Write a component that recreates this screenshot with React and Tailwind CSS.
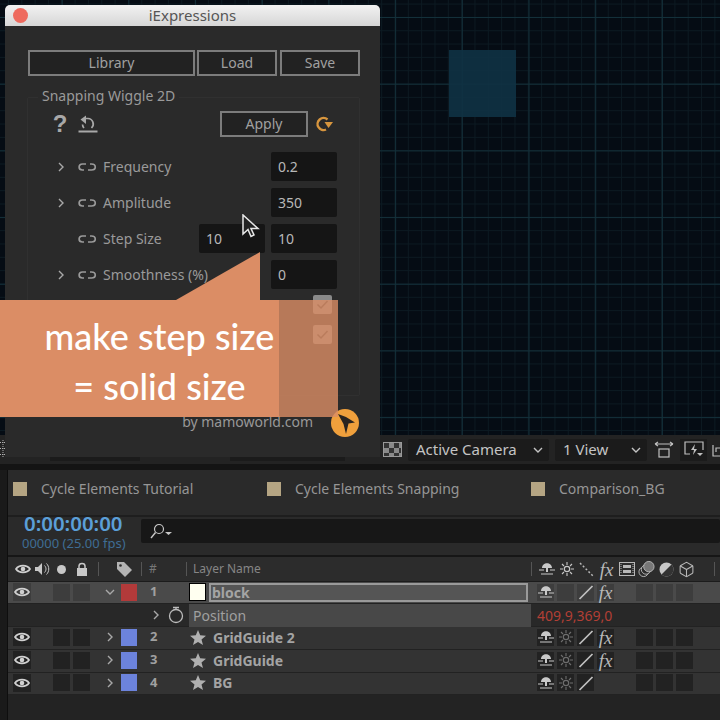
import React from "react";
import { Box } from "lucide-react";

const sans = "font-['Noto_Sans',sans-serif]";

const Eye = () => (
  <svg width="16" height="12" viewBox="0 0 16 12" className="text-[#d0d0d0]">
    <path d="M1 6C4 1.500 12 1.500 15 6C12 10.500 4 10.500 1 6Z" fill="none" stroke="currentColor" strokeWidth="1.800" />
    <circle cx="8" cy="6" r="2.300" fill="currentColor" />
  </svg>
);
const Chevron = ({ down }) => (
  <svg width="10" height="12" viewBox="0 0 10 12" className="text-[#a8a8a8]">
    <path d={down ? "M1 4L5 8L9 4" : "M3 2L7 6L3 10"} fill="none" stroke="currentColor" strokeWidth="1.400" />
  </svg>
);
const Link = () => (
  <svg width="22" height="10" viewBox="0 0 22 10" className="text-[#9a9a9a]">
    <path d="M9 2H5.500C1 2 1 8 5.500 8H7M13 2H14.500C19.500 2 19.500 8 14.500 8H11" fill="none" stroke="currentColor" strokeWidth="1.700" />
  </svg>
);
const Shy = () => (
  <svg width="16" height="14" viewBox="0 0 16 14" className="text-[#c8c8c8]">
    <path d="M3 6C3 -0.500 13 -0.500 13 6H9V10H7V6Z" fill="currentColor" />
    <path d="M0 8H5M11 8H16M2 12H14" stroke="currentColor" strokeWidth="1.200" />
  </svg>
);
const Sun = ({ dim }) => (
  <svg width="14" height="14" viewBox="0 0 14 14" className={dim ? "text-[#6e6e6e]" : "text-[#c8c8c8]"}>
    <circle cx="7" cy="7" r="2.700" fill="none" stroke="currentColor" strokeWidth="1.200" />
    <path d="M7 0V3M7 11V14M0 7H3M11 7H14M2 2L4 4M10 10L12 12M12 2L10 4M4 10L2 12" stroke="currentColor" strokeWidth="1.100" />
  </svg>
);
const Slash = () => (
  <svg width="16" height="16" viewBox="0 0 16 16" className="text-[#c0c0c0]">
    <path d="M1.500 15L14.500 2" stroke="currentColor" strokeWidth="1.700" />
  </svg>
);
const Fx = () => <span className="font-['Liberation_Serif',serif] italic text-[19px] leading-none text-[#b8b8b8]">fx</span>;
const Star = () => (
  <svg width="16" height="15" viewBox="0 0 16 15" className="text-[#b0b0b0]">
    <path d="M8 0L10.200 5.200L16 5.700L11.500 9.400L13 15L8 12L3 15L4.500 9.400L0 5.700L5.800 5.200Z" fill="currentColor" />
  </svg>
);

const SwitchCell = ({ bg, children }) => (
  <div className={`w-[17px] h-[17px] flex items-center justify-center ${bg}`}>{children}</div>
);

const Layer = ({ n, name, color, cellBg, rowBg, h, star, open, fx = true, sunDim = true }) => (
  <div className={`flex items-center w-full ${h} ${rowBg} border-b border-[#222222] ${star ? "pb-[2px]" : "pb-[1px]"}`}>
    <div className={`ml-[5px] w-[18px] h-[18px] flex items-center justify-center ${cellBg}`}><Eye /></div>
    <div className={`ml-[22px] w-[17px] h-[17px] ${cellBg}`} />
    <div className={`ml-[3px] w-[17px] h-[17px] ${cellBg}`} />
    <div className="ml-[14px] w-[12px] flex justify-center"><Chevron down={open} /></div>
    <div className={`ml-[5px] w-[16px] h-[17px] ${color}`} />
    <div className={`ml-[13px] w-[10px] text-[13px] font-bold text-[#a0a0a0] ${sans}`}>{n}</div>
    <div className="ml-[29px] w-[17px] flex justify-center">
      {star ? <Star /> : <div className="w-[18px] h-[18px] bg-[#fffff0] border border-black" />}
    </div>
    {star ? (
      <div className={`ml-[7px] w-[318px] text-[14px] font-bold text-[#a4a4a4] ${sans}`}>{name}</div>
    ) : (
      <div className={`ml-[3px] w-[319px] h-[19px] mr-[3px] border-2 border-[#9a9a9a] bg-[#555555] pl-[1px] flex items-center text-[14px] font-bold text-[#a4a4a4] ${sans}`}>{name}</div>
    )}
    <div className="ml-[6px] flex gap-[3px] items-center">
      <SwitchCell bg={cellBg}><Shy /></SwitchCell>
      <SwitchCell bg={cellBg}>{sunDim ? <Sun dim /> : null}</SwitchCell>
      <SwitchCell bg={cellBg}><Slash /></SwitchCell>
      {fx ? <SwitchCell bg={cellBg}><Fx /></SwitchCell> : <div className="w-[17px]" />}
      <div className="w-[16px]" />
      <div className={`w-[17px] h-[17px] ${cellBg}`} />
      <div className={`w-[17px] h-[17px] ${cellBg}`} />
      <div className={`w-[17px] h-[17px] ${cellBg}`} />
    </div>
  </div>
);

const Btn = ({ w, h = "h-[26px]", children }) => (
  <div className={`${w} ${h} border-2 border-[#7c7c7c] bg-[#222222] pb-[2px] flex items-center justify-center text-[14px] text-[#a0a0a0]`}>{children}</div>
);
const Field = ({ children }) => (
  <div className="w-[66px] h-[29px] rounded-[2px] bg-[#151515] pl-[7px] flex items-center text-[14px] text-[#b8b8b8]">{children}</div>
);
const Param = ({ label, chevron = true, second, value }) => (
  <div className="flex items-center h-[29px] mb-[7px]">
    <div className="w-[20px] ml-[23px] flex justify-center">{chevron && <Chevron />}</div>
    <div className="ml-[6px]"><Link /></div>
    <div className="ml-[4px] w-[96px] text-[14px] text-[#9a9a9a] whitespace-nowrap">{label}</div>
    <div className="w-[65px]">{second && <Field>{second}</Field>}</div>
    <div className="ml-[7px]"><Field>{value}</Field></div>
  </div>
);
const Check = () => (
  <div className="w-[19px] h-[19px] rounded-[2px] bg-[#8a8a8a] flex items-center justify-center">
    <svg width="13" height="11" viewBox="0 0 13 11" className="text-[#3a3a3a]"><path d="M1.500 5.500L5 9L11.500 2" fill="none" stroke="currentColor" strokeWidth="1.500" /></svg>
  </div>
);
const Swatch = () => <div className="w-[14px] h-[14px] bg-[#b5a583]" />;

export default function App() {
  return (
    <div className={`relative w-[720px] h-[720px] overflow-hidden bg-[#232323] flex flex-col ${sans}`}>
      {/* viewer */}
      <div className="h-[435px] bg-[#050c14] flex-none relative bg-[linear-gradient(#13303a_1px,transparent_1px),linear-gradient(90deg,#13303a_1px,transparent_1px),linear-gradient(#0c1a22_1px,transparent_1px),linear-gradient(90deg,#0c1a22_1px,transparent_1px)] bg-[size:66.700px_66.700px,66.700px_66.700px,13.340px_13.340px,13.340px_13.340px] bg-[position:61.700px_17px,61.700px_17px,8px_3.600px,8px_3.600px]">
        <div className="absolute left-[449px] top-[50px] w-[67px] h-[67px] bg-[#0f3244] opacity-90" />
      </div>

      {/* viewer toolbar */}
      <div className="h-[29px] flex-none bg-[#232323] flex items-center">
        <div className="ml-[50px] w-[90px] h-[22px] bg-[#1b1b1b]" />
        <div className="ml-[90px] w-[115px] h-[22px] bg-[#1b1b1b]" />
        <div className="ml-[38px] w-[19px] h-[15px] bg-[repeating-conic-gradient(#8a8a8a_0_25%,#333333_0_50%)] bg-[size:10px_10px] border border-[#999999]" />
        <div className="ml-[6px] w-[141px] h-[22px] rounded-[2px] bg-[#1b1b1b] flex items-center justify-between pl-[8px] pr-[5px] text-[15px] text-[#c4c4c4]">
          Active Camera
          <svg width="12" height="12" viewBox="0 0 12 12" className="text-[#c4c4c4]"><path d="M2 4L6 8L10 4" fill="none" stroke="currentColor" strokeWidth="1.400" /></svg>
        </div>
        <div className="ml-[6px] w-[92px] h-[22px] rounded-[2px] bg-[#1b1b1b] flex items-center justify-between pl-[8px] pr-[5px] text-[15px] text-[#c4c4c4]">
          1 View
          <svg width="12" height="12" viewBox="0 0 12 12" className="text-[#c4c4c4]"><path d="M2 4L6 8L10 4" fill="none" stroke="currentColor" strokeWidth="1.400" /></svg>
        </div>
        <svg width="22" height="18" viewBox="0 0 22 18" className="ml-[6px] text-[#c0c0c0]">
          <path d="M2 3H20M2 3L5 1M2 3L5 5M20 3L17 1M20 3L17 5" fill="none" stroke="currentColor" strokeWidth="1.200" />
          <rect x="6" y="8" width="10" height="8" fill="none" stroke="currentColor" strokeWidth="1.200" />
        </svg>
        <div className="ml-[5px] w-[27px] h-[22px] bg-[#1b1b1b] flex items-center justify-center">
          <svg width="20" height="17" viewBox="0 0 20 17" className="text-[#c0c0c0]">
            <path d="M6 13H1V1H19V9" fill="none" stroke="currentColor" strokeWidth="1.200" />
            <path d="M11 3L7 9H10L9 14L13 8H10Z" fill="currentColor" />
            <path d="M13 12H19L16 15Z" fill="currentColor" />
          </svg>
        </div>
        <svg width="8" height="14" viewBox="0 0 8 14" className="ml-[5px] text-[#c0c0c0]"><path d="M1 2V13H8M4 9V5H8" fill="none" stroke="currentColor" strokeWidth="1.200" /></svg>
      </div>

      <div className="h-[6px] flex-none bg-[#141414]" />

      {/* timeline */}
      <div className="flex-1 flex">
        <div className="w-[8px] bg-[#1a1a1a] border-r border-[#0e0e0e]" />
        <div className="flex-1 flex flex-col bg-[#232323] min-w-0">
          <div className="h-[47px] bg-[#2a2a2a] border-b-2 border-[#1e1e1e] flex items-center pb-[8px] text-[14px] text-[#969696] whitespace-nowrap">
            <div className="ml-[5px]"><Swatch /></div>
            <div className="ml-[14px] w-[226px]">Cycle Elements Tutorial</div>
            <Swatch />
            <div className="ml-[14px] w-[236px]">Cycle Elements Snapping</div>
            <Swatch />
            <div className="ml-[14px]">Comparison_BG</div>
          </div>
          <div className="h-[38px] bg-[#2a2a2a] flex">
            <div className="w-[133px] pl-[14px] flex flex-col items-start -mt-[4px] whitespace-nowrap">
              <div className="text-[20.400px] leading-[20px] font-semibold text-[#5b9fd8] pl-[2px]">0:00:00:00</div>
              <div className="mt-[2px] text-[13px] leading-[17px] text-[#3f6d94]">00000 (25.00 fps)</div>
            </div>
            <div className="flex-1 h-[24px] mt-[2px] rounded-[2px] bg-[#171717] flex items-center pl-[9px]">
              <svg width="22" height="16" viewBox="0 0 22 16" className="text-[#c8c8c8]">
                <circle cx="9" cy="6" r="4.500" fill="none" stroke="currentColor" strokeWidth="1.200" />
                <path d="M5.500 9.500L1 15" stroke="currentColor" strokeWidth="1.400" />
                <path d="M15 9H22L18.500 12Z" fill="currentColor" />
              </svg>
            </div>
          </div>
          <div className="h-[27px] bg-[#2c2c2c] border-t-2 border-[#161616] border-b border-b-[#1c1c1c] flex items-center text-[12px] text-[#868686] whitespace-nowrap">
            <div className="ml-[7px]"><Eye /></div>
            <svg width="15" height="14" viewBox="0 0 15 14" className="ml-[4px] text-[#c8c8c8]"><path d="M0 5H3L7 1V13L3 9H0Z" fill="currentColor" /><path d="M9.500 3.500C11.500 5.500 11.500 8.500 9.500 10.500M11.500 1.500C14.500 4.500 14.500 9.500 11.500 12.500" fill="none" stroke="currentColor" /></svg>
            <div className="ml-[7px] w-[9px] h-[9px] rounded-full bg-[#c8c8c8]" />
            <svg width="12" height="14" viewBox="0 0 12 14" className="ml-[10px] text-[#c8c8c8]"><path d="M3 6V4C3 0.500 9 0.500 9 4V6" fill="none" stroke="currentColor" strokeWidth="1.500" /><rect x="1" y="6" width="10" height="8" fill="currentColor" /></svg>
            <div className="ml-[10px] w-px h-[14px] bg-[#555555]" />
            <svg width="16" height="16" viewBox="0 0 16 16" className="ml-[17px] text-[#b4b4b4]"><path d="M1 1H8L16 9L9 16L1 8Z" fill="currentColor" /><circle cx="4.500" cy="4.500" r="1.300" fill="#2c2c2c" /></svg>
            <div className="ml-[9px] w-px h-[14px] bg-[#555555]" />
            <div className="ml-[7px] w-[14px] text-[#777777]">#</div>
            <div className="ml-[23px] w-px h-[14px] bg-[#555555]" />
            <div className="ml-[6px] w-[338px]">Layer Name</div>
            <div className="w-px h-[14px] bg-[#555555]" />
            <div className="ml-[6px] flex items-center gap-[3px]">
              <SwitchCell bg=""><Shy /></SwitchCell>
              <SwitchCell bg=""><Sun /></SwitchCell>
              <SwitchCell bg="">
                <svg width="15" height="15" viewBox="0 0 15 15" className="text-[#b8b8b8]"><path d="M1 1L14 14" stroke="currentColor" strokeWidth="1.500" strokeDasharray="2 2" /></svg>
              </SwitchCell>
              <SwitchCell bg=""><Fx /></SwitchCell>
              <SwitchCell bg="">
                <svg width="16" height="14" viewBox="0 0 16 14" className="text-[#b8b8b8]"><rect x="0.500" y="0.500" width="15" height="13" fill="none" stroke="currentColor" /><rect x="4" y="3" width="8" height="3" fill="currentColor" /><rect x="4" y="8" width="8" height="3" fill="currentColor" /><path d="M2 2V12M14 2V12" stroke="currentColor" strokeDasharray="1 1" /></svg>
              </SwitchCell>
              <SwitchCell bg="">
                <svg width="18" height="18" viewBox="0 0 18 18" className="text-[#b8b8b8]"><circle cx="6" cy="12" r="5" fill="none" stroke="currentColor" /><circle cx="8.500" cy="9.500" r="5" fill="#2c2c2c" stroke="currentColor" /><circle cx="11.500" cy="6.500" r="5.500" fill="#777777" stroke="currentColor" /></svg>
              </SwitchCell>
              <SwitchCell bg="">
                <svg width="15" height="15" viewBox="0 0 15 15" className="text-[#c8c8c8]"><circle cx="7.500" cy="7.500" r="7" fill="currentColor" /><path d="M12.500 2.500A7 7 0 0 1 2.500 12.500Z" fill="#333333" /></svg>
              </SwitchCell>
              <SwitchCell bg=""><Box size={17} strokeWidth={1.500} className="text-[#b8b8b8]" /></SwitchCell>
            </div>
            <div className="ml-[19px] w-px h-[14px] bg-[#555555]" />
          </div>

          <Layer n="1" name="block" color="bg-[#b23a3a]" cellBg="bg-[#3d3d3d]" rowBg="bg-[#4a4a4a]" h="h-[22px]" open sunDim={false} />
          <div className="h-[23px] flex-none bg-[#282828] flex items-center border-b border-[#222222]">
            <div className="ml-[142px] w-[12px] flex justify-center"><Chevron /></div>
            <svg width="16" height="18" viewBox="0 0 16 18" className="ml-[6px] text-[#bcbcbc]">
              <circle cx="8" cy="10" r="6.500" fill="none" stroke="currentColor" strokeWidth="1.300" />
              <path d="M5 1.500H11M8 1.500V4" stroke="currentColor" strokeWidth="1.300" />
            </svg>
            <div className="ml-[5px] w-[342px] h-[23px] bg-[#484848] pl-[4px] flex items-center text-[14px] text-[#a0a0a0]">Position</div>
            <div className="ml-[6px] text-[14px] text-[#b23f35]">409,9,369,0</div>
          </div>
          <Layer n="2" name="GridGuide 2" color="bg-[#6c83dc]" cellBg="bg-[#222222]" rowBg="bg-[#333333]" h="h-[23px]" star />
          <Layer n="3" name="GridGuide" color="bg-[#6c83dc]" cellBg="bg-[#222222]" rowBg="bg-[#333333]" h="h-[23px]" star />
          <Layer n="4" name="BG" color="bg-[#6c83dc]" cellBg="bg-[#222222]" rowBg="bg-[#333333]" h="h-[22px]" star fx={false} />
        </div>
      </div>

      {/* plus-tool remnant at the panel's edge */}
      <svg width="10" height="18" viewBox="0 0 10 18" className="absolute left-0 top-[440px] text-[#b0b0b0]">
        <path d="M3 0V5M0 2.500H6M3 6V11M0 8.500H6M3 12V17M0 14.500H6" stroke="currentColor" strokeDasharray="1 1" />
      </svg>

      {/* floating iExpressions window */}
      <div className="absolute left-[5px] top-[5px] w-[375px] h-[452px] rounded-t-[5px] bg-[#2a2a2a] flex flex-col">
        <div className="h-[21px] flex-none rounded-t-[5px] bg-[linear-gradient(#f2f2f2,#d6d6d6)] relative flex items-center justify-center text-[15px] text-[#555555]">
          <div className="absolute left-[8px] top-[3px] w-[15px] h-[15px] rounded-full bg-[#ee6a5e]" />
          iExpressions
        </div>
        <div className="mt-[24px] ml-[23px] flex">
          <Btn w="w-[167px]">Library</Btn>
          <div className="ml-[2px]"><Btn w="w-[80px]">Load</Btn></div>
          <div className="ml-[3px]"><Btn w="w-[80px]">Save</Btn></div>
        </div>
        <div className="relative mt-[21px] ml-[22px] w-[333px] h-[299px] border border-[#303030] rounded-[2px]">
          <div className="absolute left-[10px] -top-[12px] px-[4px] bg-[#2a2a2a] text-[14px] leading-[20px] text-[#9a9a9a] whitespace-nowrap">Snapping Wiggle 2D</div>
          <div className="flex items-center h-[26px] mt-[13px]">
            <div className="ml-[24px] w-[16px] text-[24px] leading-[26px] font-bold text-[#a8a8a8] text-center font-['Liberation_Sans',sans-serif]">?</div>
            <svg width="20" height="18" viewBox="0 0 20 18" className="ml-[10px] text-[#a8a8a8]">
              <path d="M7 3.500H10A5.500 5.500 0 0 1 13.500 13" fill="none" stroke="currentColor" strokeWidth="1.700" />
              <path d="M8 0.500V9L2.500 4.500Z" fill="currentColor" />
              <path d="M4.500 9.500A5.500 5.500 0 0 0 6 13" fill="none" stroke="currentColor" strokeWidth="1.700" />
              <path d="M0.500 16.500H19.500" stroke="currentColor" strokeWidth="2" />
            </svg>
            <div className="ml-[122px]"><Btn w="w-[88px]">Apply</Btn></div>
            <svg width="19" height="16" viewBox="0 0 19 16" className="ml-[7px] text-[#d8963e]">
              <path d="M12.500 3.500A6 6 0 1 0 11 13.500" fill="none" stroke="currentColor" strokeWidth="2.400" />
              <path d="M9.500 6H18L13.500 12Z" fill="currentColor" />
            </svg>
          </div>
          <div className="mt-[15px] flex flex-col">
            <Param label="Frequency" value="0.2" />
            <Param label="Amplitude" value="350" />
            <Param label="Step Size" chevron={false} second="10" value="10" />
            <Param label="Smoothness (%)" value="0" />
          </div>
          <div className="ml-[285px] flex flex-col gap-[11px] mt-[-1px]">
            <Check />
            <Check />
          </div>
        </div>
        <div className="mt-[13px] flex items-center justify-end mr-[21px]">
          <div className="text-[14px] text-[#989898] pb-[3px]">by mamoworld.com</div>
          <svg width="28" height="28" viewBox="0 0 28 28" className="ml-[18px]">
            <circle cx="14" cy="14" r="14" fill="#f0a03c" />
            <path d="M7 5L15 8L24 13.500L17.500 14.500L15 25L12.500 15Z" fill="#2a2420" />
          </svg>
        </div>
      </div>

      {/* annotation callout */}
      <div className="absolute left-0 top-[300px] flex h-[117px]">
        <div className="w-[279px] bg-[#db8d65] pl-[40px] pt-[4px] flex flex-col items-center justify-center text-[36px] leading-[50px] font-medium text-white whitespace-nowrap font-['Lato',sans-serif]">
          <div>make step size</div>
          <div>= solid size</div>
        </div>
        <div className="w-[59px] bg-[#db8d65]/80" />
      </div>
      <svg width="84" height="48" viewBox="0 0 84 48" className="absolute left-[176px] top-[252px]">
        <path d="M0 48L84 0V48Z" fill="#db8d65" />
      </svg>

      {/* mouse pointer */}
      <svg width="18" height="24" viewBox="0 0 18 24" className="absolute left-[242px] top-[214px]">
        <path d="M1 1V20L6 15.500L9 22.500L12 21L9 14.500H16Z" fill="#222222" stroke="#e8e8e8" strokeWidth="1.500" />
      </svg>
    </div>
  );
}
